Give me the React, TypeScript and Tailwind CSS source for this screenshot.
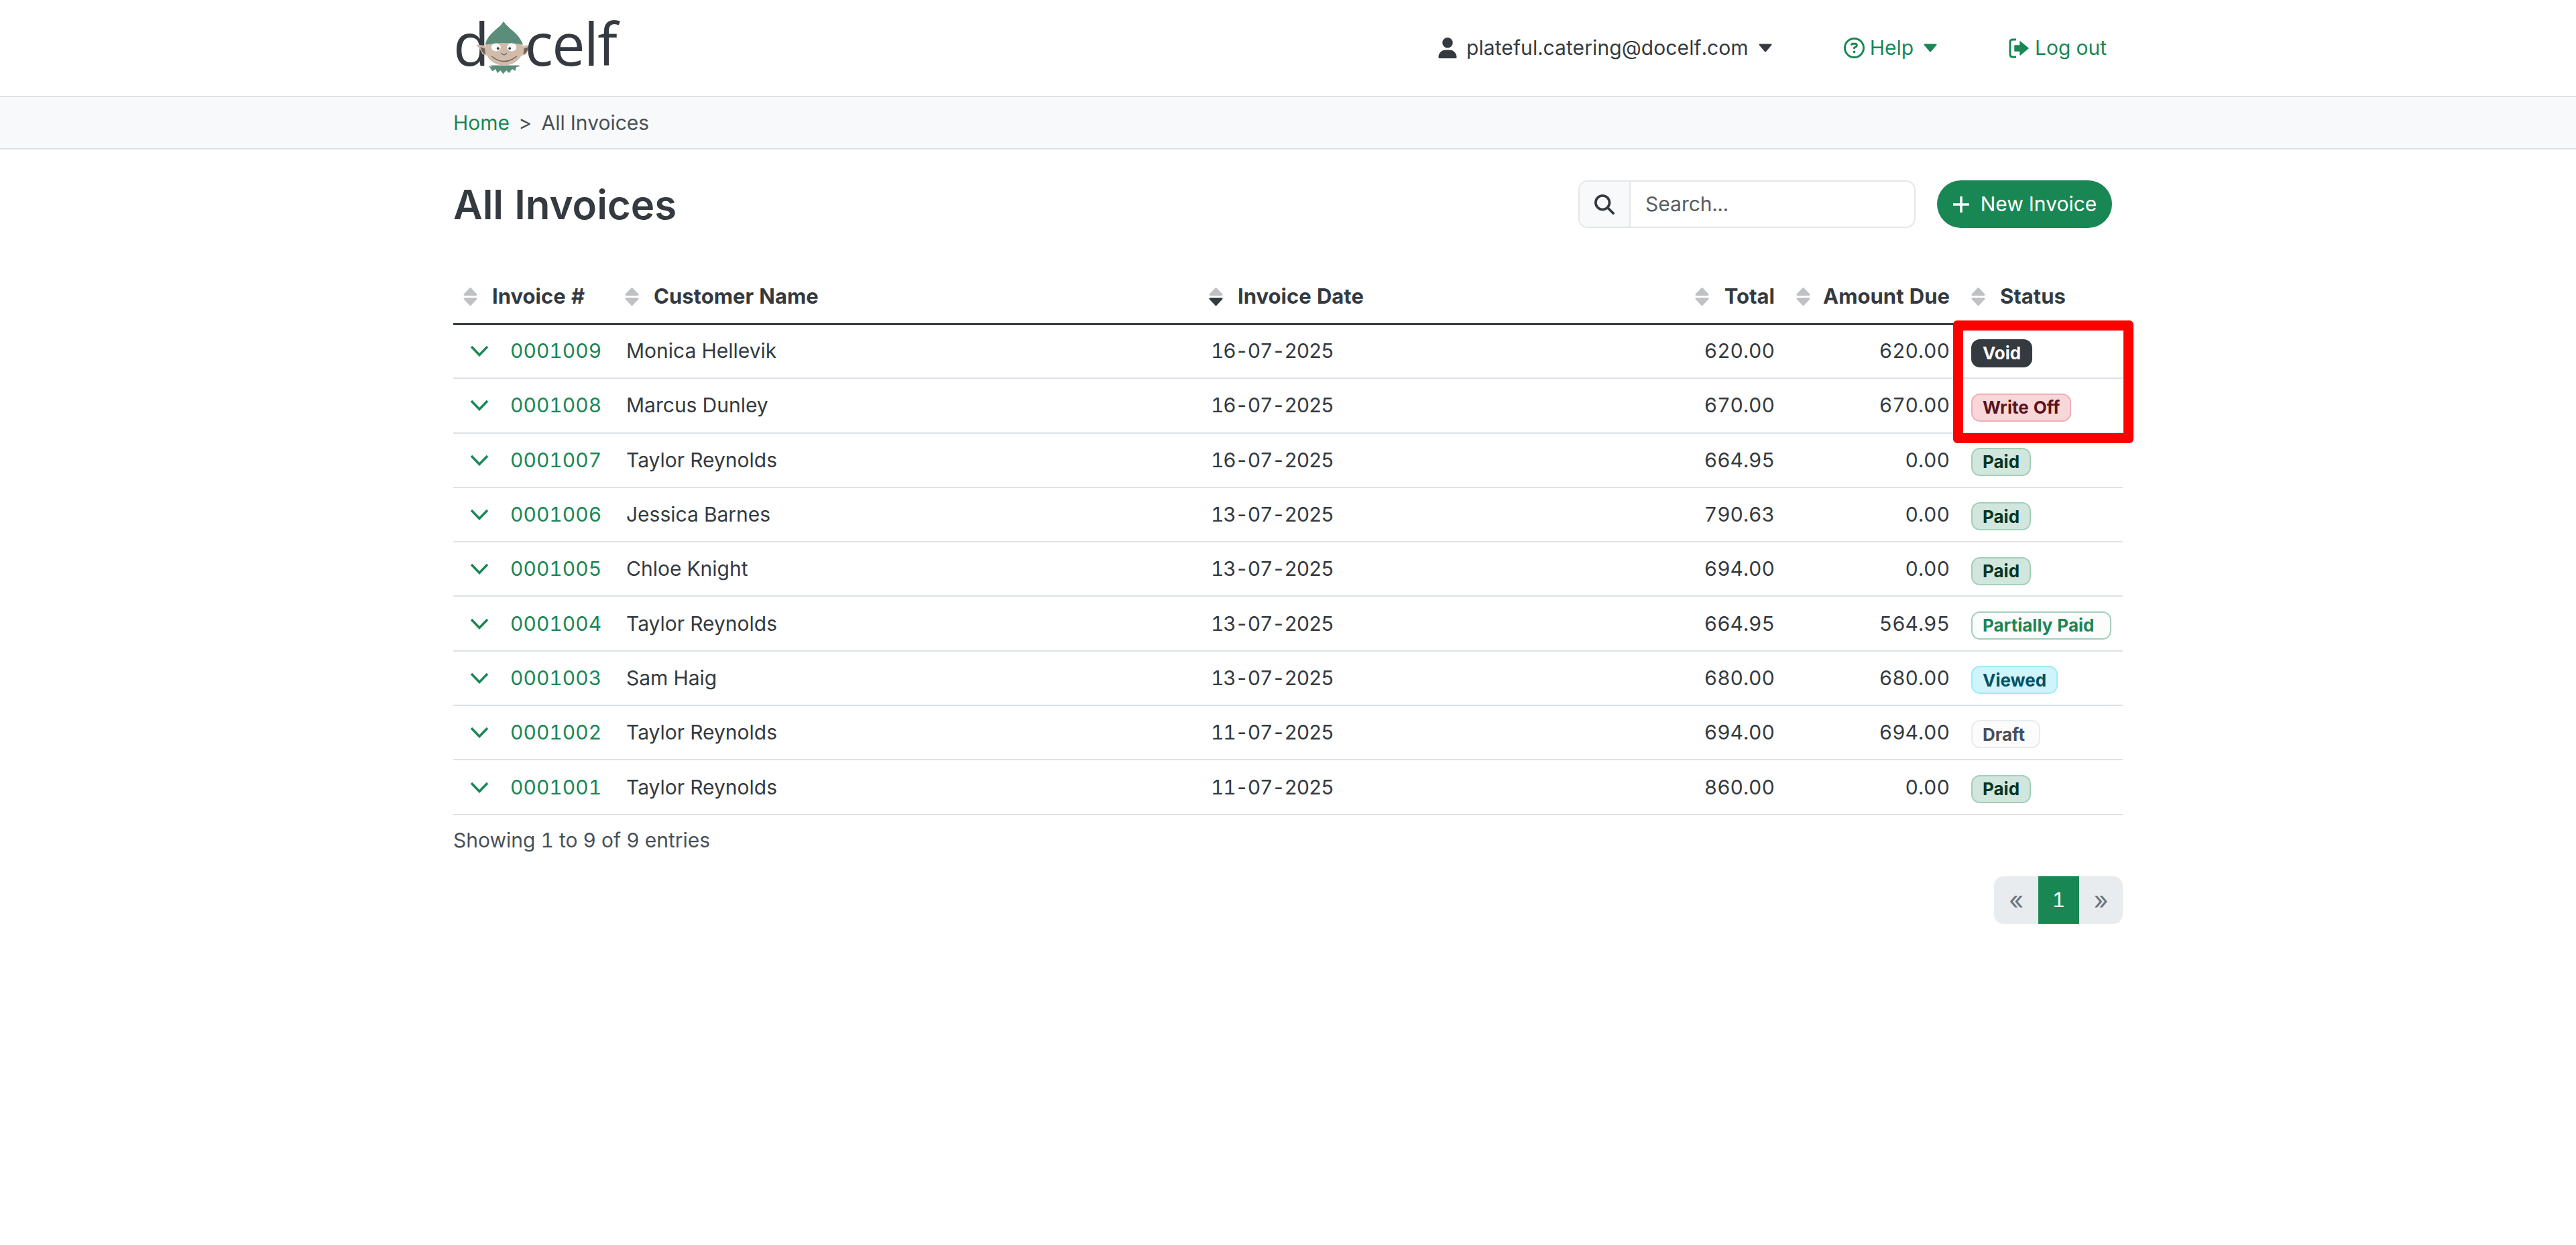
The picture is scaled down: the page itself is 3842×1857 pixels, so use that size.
import { FaUser, FaMagnifyingGlass, FaRegCircleQuestion } from 'react-icons/fa6'

const rows = [
  { id: '0001009', name: 'Monica Hellevik', date: '16-07-2025', total: '620.00', due: '620.00', status: 'Void' },
  { id: '0001008', name: 'Marcus Dunley', date: '16-07-2025', total: '670.00', due: '670.00', status: 'Write Off' },
  { id: '0001007', name: 'Taylor Reynolds', date: '16-07-2025', total: '664.95', due: '0.00', status: 'Paid' },
  { id: '0001006', name: 'Jessica Barnes', date: '13-07-2025', total: '790.63', due: '0.00', status: 'Paid' },
  { id: '0001005', name: 'Chloe Knight', date: '13-07-2025', total: '694.00', due: '0.00', status: 'Paid' },
  { id: '0001004', name: 'Taylor Reynolds', date: '13-07-2025', total: '664.95', due: '564.95', status: 'Partially Paid' },
  { id: '0001003', name: 'Sam Haig', date: '13-07-2025', total: '680.00', due: '680.00', status: 'Viewed' },
  { id: '0001002', name: 'Taylor Reynolds', date: '11-07-2025', total: '694.00', due: '694.00', status: 'Draft' },
  { id: '0001001', name: 'Taylor Reynolds', date: '11-07-2025', total: '860.00', due: '0.00', status: 'Paid' },
]

const badgeStyles: Record<string, string> = {
  Void: 'bg-[#343a40] border-[#343a40] text-white',
  'Write Off': 'bg-[#f8d7da] border-[#f1aeb5] text-[#58151c]',
  Paid: 'bg-[#d1e7dd] border-[#a3cfbb] text-[#0a3622]',
  'Partially Paid': 'bg-[#fcfcfd] border-[#a3cfbb] text-[#198754] w-[209px]',
  Viewed: 'bg-[#cff4fc] border-[#9eeaf9] text-[#055160]',
  Draft: 'bg-[#fcfcfd] border-[#e9ecef] text-[#495057] w-[103px]',
}

function SortIcon({ active }: { active?: boolean }) {
  return (
    <svg viewBox="0 0 21 27" className="w-[21px] h-[27px] shrink-0">
      <path d="M10.5 1.5 L19 10.5 H2 Z" fill="#bfc1c4" stroke="#bfc1c4" strokeWidth="3" strokeLinejoin="round" />
      <path d="M2 16.5 H19 L10.5 25.5 Z" fill={active ? '#343a40' : '#bfc1c4'} stroke={active ? '#343a40' : '#bfc1c4'} strokeWidth="3" strokeLinejoin="round" />
    </svg>
  )
}

function Caret({ color }: { color: string }) {
  return (
    <svg viewBox="0 0 20 13" className="w-[20px] h-[13px] shrink-0">
      <path d="M1.5 1.5 H18.5 L10 11.5 Z" fill={color} stroke={color} strokeWidth="2" strokeLinejoin="round" />
    </svg>
  )
}

function Chevron() {
  return (
    <svg viewBox="0 0 28 17" className="w-[28px] h-[17px] shrink-0">
      <path d="M2 2 L14 14.5 L26 2" fill="none" stroke="#198754" strokeWidth="3.5" />
    </svg>
  )
}

function LogoutIcon() {
  return (
    <svg viewBox="0 0 31 30" className="w-[31px] h-[30px] shrink-0">
      <path d="M11 2 H6 Q2 2 2 6 V24 Q2 28 6 28 H11" fill="none" stroke="#198754" strokeWidth="3" />
      <path d="M9 11 H17 V5 L29 15 L17 25 V19 H9 Z" fill="#198754" stroke="#198754" strokeWidth="1.5" strokeLinejoin="round" />
    </svg>
  )
}

function Elf() {
  return (
    <svg viewBox="150 62 256 242" className="w-[87px] h-[81px] shrink-0 -ml-[21px] -mr-[13px] mt-[13px]">
      <path d="M207 266 L224 272 L214 264 L340 264 L350 266 L330 272 L326 288 L312 280 L298 298 L286 286 L272 302 L260 286 L246 298 L238 280 L224 290 Z" fill="#5b8d7b" />
      <path d="M150 172 L205 176 L205 222 L180 214 Q170 190 150 172 Z" fill="#d1bcab" />
      <path d="M405 172 L350 176 L350 222 L375 214 Q385 190 405 172 Z" fill="#d1bcab" />
      <path d="M170 182 L190 188 L193 215 Q176 208 170 182 Z" fill="#6f6258" />
      <path d="M385 182 L365 188 L362 215 Q379 208 385 182 Z" fill="#6f6258" />
      <ellipse cx="276" cy="192" rx="83" ry="72" fill="#d1bcab" />
      <path d="M274 67 C262 90 225 110 205 140 Q195 155 192 172 Q276 155 360 172 Q355 155 340 135 C320 110 286 90 274 67 Z" fill="#5b8d7b" />
      <ellipse cx="240" cy="183" rx="21" ry="18" fill="#fff" />
      <ellipse cx="310" cy="183" rx="21" ry="18" fill="#fff" />
      <circle cx="249" cy="188" r="5.5" fill="#33383f" />
      <circle cx="301" cy="188" r="5.5" fill="#33383f" />
      <path d="M264 208 Q276 226 288 208" fill="none" stroke="#6f6258" strokeWidth="3.5" />
      <path d="M222 224 Q276 268 331 224" fill="none" stroke="#6f6258" strokeWidth="4.5" strokeLinecap="round" />
    </svg>
  )
}

export default function App() {
  return (
    <div className="min-h-[1857px] bg-white font-['Inter',sans-serif] text-[30px] text-[#343a40] tabular-nums">
      <header className="h-[145px] border-b-2 border-[#dee2e6]">
        <div className="w-[2490px] mx-auto h-full flex items-center justify-between pr-[24px]">
          <a className="flex items-center text-[#343a40] font-['Open_Sans',sans-serif] font-medium text-[88px] leading-none -mt-[16px]">
            <span>d</span>
            <Elf />
            <span className="tracking-[-1.8px]">celf</span>
          </a>
          <nav className="flex items-center gap-[107px]">
            <div className="flex items-center">
              <FaUser className="w-[28px] h-[31px] mr-[14px]" />
              <span className="tracking-[0.1px]">plateful.catering@docelf.com</span>
              <span className="ml-[15px]"><Caret color="#343a40" /></span>
            </div>
            <div className="flex items-center text-[#198754]">
              <FaRegCircleQuestion className="w-[31px] h-[31px] mr-[8px]" />
              <span>Help</span>
              <span className="ml-[15px]"><Caret color="#198754" /></span>
            </div>
            <div className="flex items-center text-[#198754]">
              <LogoutIcon />
              <span className="ml-[8px]">Log out</span>
            </div>
          </nav>
        </div>
      </header>

      <div className="h-[78px] bg-[#f8f9fa] border-b-2 border-[#dee2e6]">
        <div className="w-[2490px] mx-auto h-full flex items-center">
          <a className="text-[#198754]">Home</a>
          <span className="mx-[14px] text-[#495057]">&gt;</span>
          <span className="text-[#495057]">All Invoices</span>
        </div>
      </div>

      <main className="w-[2490px] mx-auto pt-[46px]">
        <div className="flex items-center justify-between h-[71px]">
          <h1 className="text-[60px] font-semibold leading-none">All Invoices</h1>
          <div className="flex items-center gap-[32px] pr-[16px]">
            <div className="flex h-[71px] w-[503px] rounded-[14px] border-2 border-[#e4e6e9] overflow-hidden">
              <div className="w-[76px] shrink-0 bg-[#f8f9fa] border-r-2 border-[#e4e6e9] flex items-center justify-center">
                <FaMagnifyingGlass className="w-[30px] h-[30px]" />
              </div>
              <input placeholder="Search..." className="flex-1 min-w-0 pl-[22px] outline-none placeholder:text-[#595c5f]" />
            </div>
            <button className="h-[71px] w-[261px] rounded-full bg-[#198754] text-white flex items-center justify-center gap-[16px]">
              <svg viewBox="0 0 26 26" className="w-[26px] h-[26px]">
                <path d="M13 1 V25 M1 13 H25" stroke="#fff" strokeWidth="3.5" />
              </svg>
              New Invoice
            </button>
          </div>
        </div>

        <div className="relative mt-[60px]">
          <table className="w-full table-fixed border-collapse">
            <colgroup>
              <col className="w-[242px]" />
              <col className="w-[872px]" />
              <col className="w-[722px]" />
              <col className="w-[151px]" />
              <col className="w-[261px]" />
              <col className="w-[242px]" />
            </colgroup>
            <thead className="text-[31px]">
              <tr className="h-[83px] border-b-[3px] border-[#343a40]">
                <th className="px-[15px] pt-[3px] font-bold text-left">
                  <div className="flex items-center gap-[22px]"><SortIcon /><span>Invoice #</span></div>
                </th>
                <th className="px-[14px] pt-[3px] font-bold text-left">
                  <div className="flex items-center gap-[22px]"><SortIcon /><span>Customer Name</span></div>
                </th>
                <th className="px-[13px] pt-[3px] font-bold text-left">
                  <div className="flex items-center gap-[22px]"><SortIcon active /><span>Invoice Date</span></div>
                </th>
                <th className="px-[16px] pt-[3px] font-bold">
                  <div className="flex items-center justify-between"><SortIcon /><span>Total</span></div>
                </th>
                <th className="px-[16px] pt-[3px] font-bold">
                  <div className="flex items-center justify-between"><SortIcon /><span>Amount Due</span></div>
                </th>
                <th className="px-[16px] pt-[3px] font-bold text-left">
                  <div className="flex items-center gap-[22px]"><SortIcon /><span>Status</span></div>
                </th>
              </tr>
            </thead>
            <tbody>
              {rows.map((r) => (
                <tr key={r.id} className="h-[81.3px] border-b-2 border-[#dee2e6]">
                  <td className="px-[16px]">
                    <div className="flex items-center gap-[32px] pl-[9px]">
                      <Chevron />
                      <a className="text-[#198754]">{r.id}</a>
                    </div>
                  </td>
                  <td className="px-[16px]">{r.name}</td>
                  <td className="px-[16px] tracking-[-1.2px]">{r.date}</td>
                  <td className="px-[16px] text-right">{r.total}</td>
                  <td className="px-[16px] text-right">{r.due}</td>
                  <td className="px-[16px]">
                    <span className={`inline-flex items-center h-[42px] mt-[6px] px-[15px] rounded-[13px] border-2 text-[26px] font-bold ${badgeStyles[r.status]}`}>
                      {r.status}
                    </span>
                  </td>
                </tr>
              ))}
            </tbody>
          </table>
          <div className="absolute left-[2237px] top-[78px] w-[269px] h-[183px] rounded-[6px] border-[15px] border-[#ff0000]" />
        </div>

        <div className="mt-[15px] text-[#495057]">Showing 1 to 9 of 9 entries</div>

        <div className="flex justify-end mt-[31px]">
          <div className="flex h-[71px] rounded-[14px] overflow-hidden">
            <span className="w-[66px] bg-[#e9ecef] text-[#6c757d] text-[38px] flex items-center justify-center">«</span>
            <span className="w-[61px] bg-[#198754] text-white flex items-center justify-center">1</span>
            <span className="w-[65px] bg-[#e9ecef] text-[#6c757d] text-[38px] flex items-center justify-center">»</span>
          </div>
        </div>
      </main>
    </div>
  )
}
